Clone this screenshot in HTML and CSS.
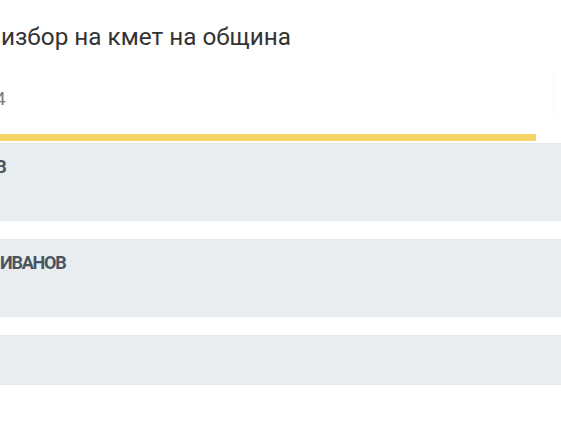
FILE: index.html
```html
<!DOCTYPE html>
<html lang="bg">
<head>
<meta charset="utf-8">
<title>Избор на кмет на община</title>
<link rel="stylesheet" href="styles.css">
</head>
<body>
<div class="page">
  <header class="head">
    <h1 class="title">избор на кмет на община</h1>
    <div class="meta">
      <span class="meta-date">2024</span>
      <span class="meta-edge"></span>
    </div>
  </header>
  <div class="progress"><div class="progress-fill"></div></div>
  <ul class="rows">
    <li class="row"><span class="name name-cut">ИЛИЕВ</span></li>
    <li class="row"><span class="name">ИВАНОВ</span></li>
    <li class="row row-short"></li>
  </ul>
</div>
</body>
</html>
```
FILE: styles.css
```css
html, body {
  margin: 0;
  padding: 0;
  background: #ffffff;
  overflow: hidden;
}
body {
  font-family: Roboto, "Noto Sans", "DejaVu Sans", sans-serif;
  color: #333;
}
.page {
  width: 561px;
}
.head {
  height: 134px;
  display: flex;
  flex-direction: column;
}
.title {
  margin: 22px 0 0 1px;
  font-size: 24.3px;
  line-height: 29px;
  font-weight: 400;
  color: #333;
  white-space: nowrap;
}
.meta {
  margin-top: 36px;
  display: flex;
  justify-content: space-between;
  align-items: flex-start;
}
.meta-date {
  font-size: 19px;
  line-height: 24px;
  color: #7a7a7a;
  margin-left: -37px;
  font-weight: 400;
}
.meta-edge {
  width: 1px;
  height: 47px;
  margin-right: 7px;
  margin-top: -18px;
  background: #f6f6f6;
}
.progress {
  height: 7px;
  width: 561px;
}
.progress-fill {
  width: 536px;
  height: 100%;
  background: #f6d466;
}
.rows {
  list-style: none;
  margin: 2px 0 0;
  padding: 0;
  display: flex;
  flex-direction: column;
  gap: 18px;
}
.row {
  height: 78px;
  box-sizing: border-box;
  background: #eaedf0;
  border-top: 1px solid #e6e9ec;
  border-bottom: 1px solid #e6e9ec;
  padding-top: 11px;
  white-space: nowrap;
  overflow: hidden;
}
.row-short {
  height: 50px;
}
.name {
  display: inline-block;
  font-size: 18px;
  line-height: 24px;
  font-weight: 700;
  color: #4a5561;
  letter-spacing: -1.2px;
}
.name-cut {
  margin-left: -48px;
}
```
